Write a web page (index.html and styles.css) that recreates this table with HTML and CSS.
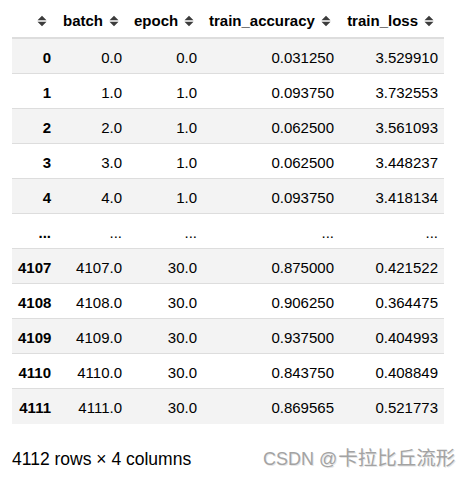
FILE: index.html
```html
<!DOCTYPE html>
<html>
<head>
<meta charset="utf-8">
<link rel="stylesheet" href="styles.css">
</head>
<body>
<div class="page">
  <table class="df">
    <colgroup>
      <col class="c-idx"><col class="c-batch"><col class="c-epoch"><col class="c-acc"><col class="c-loss">
    </colgroup>
    <thead>
      <tr>
        <th><span class="sort"><svg viewBox="0 0 10 12" width="10" height="12"><path d="M0.5 5.2 L5 0.7 L9.5 5.2 Z M0.5 6.8 L5 11.3 L9.5 6.8 Z"/></svg></span></th>
        <th>batch<span class="sort"><svg viewBox="0 0 10 12" width="10" height="12"><path d="M0.5 5.2 L5 0.7 L9.5 5.2 Z M0.5 6.8 L5 11.3 L9.5 6.8 Z"/></svg></span></th>
        <th>epoch<span class="sort"><svg viewBox="0 0 10 12" width="10" height="12"><path d="M0.5 5.2 L5 0.7 L9.5 5.2 Z M0.5 6.8 L5 11.3 L9.5 6.8 Z"/></svg></span></th>
        <th>train_accuracy<span class="sort"><svg viewBox="0 0 10 12" width="10" height="12"><path d="M0.5 5.2 L5 0.7 L9.5 5.2 Z M0.5 6.8 L5 11.3 L9.5 6.8 Z"/></svg></span></th>
        <th>train_loss<span class="sort"><svg viewBox="0 0 10 12" width="10" height="12"><path d="M0.5 5.2 L5 0.7 L9.5 5.2 Z M0.5 6.8 L5 11.3 L9.5 6.8 Z"/></svg></span></th>
      </tr>
    </thead>
    <tbody>
      <tr><th>0</th><td>0.0</td><td>0.0</td><td>0.031250</td><td>3.529910</td></tr>
      <tr><th>1</th><td>1.0</td><td>1.0</td><td>0.093750</td><td>3.732553</td></tr>
      <tr><th>2</th><td>2.0</td><td>1.0</td><td>0.062500</td><td>3.561093</td></tr>
      <tr><th>3</th><td>3.0</td><td>1.0</td><td>0.062500</td><td>3.448237</td></tr>
      <tr><th>4</th><td>4.0</td><td>1.0</td><td>0.093750</td><td>3.418134</td></tr>
      <tr><th>...</th><td>...</td><td>...</td><td>...</td><td>...</td></tr>
      <tr><th>4107</th><td>4107.0</td><td>30.0</td><td>0.875000</td><td>0.421522</td></tr>
      <tr><th>4108</th><td>4108.0</td><td>30.0</td><td>0.906250</td><td>0.364475</td></tr>
      <tr><th>4109</th><td>4109.0</td><td>30.0</td><td>0.937500</td><td>0.404993</td></tr>
      <tr><th>4110</th><td>4110.0</td><td>30.0</td><td>0.843750</td><td>0.408849</td></tr>
      <tr><th>4111</th><td>4111.0</td><td>30.0</td><td>0.869565</td><td>0.521773</td></tr>
    </tbody>
  </table>
  <p class="shape">4112 rows × 4 columns</p>
  <div class="watermark">CSDN @<span class="cjk">卡拉比丘流形</span></div>
</div>
</body>
</html>
```

FILE: styles.css
```css
html, body {
  margin: 0;
  padding: 0;
  background: #ffffff;
}

.page {
  position: relative;
  width: 471px;
  height: 477px;
  padding-left: 12px;
  box-sizing: border-box;
  font-family: "Liberation Sans", Arial, sans-serif;
  color: #000;
}

.df {
  border-collapse: collapse;
  table-layout: fixed;
  width: 432px;
  font-size: 15px;
  line-height: 17px;
}

.c-idx { width: 45px; }
.c-batch { width: 71px; }
.c-epoch { width: 75px; }
.c-acc { width: 137px; }
.c-loss { width: 104px; }

.df thead th {
  text-align: right;
  font-weight: bold;
  padding: 12px 6px 8px;
  border-bottom: 2px solid #dddddd;
  white-space: nowrap;
}

.df tbody th,
.df tbody td {
  text-align: right;
  padding: 10px 6px 7px;
  border-bottom: 1px solid #dddddd;
  white-space: nowrap;
}

.df tbody th {
  font-weight: bold;
}

.df tbody tr:last-child th,
.df tbody tr:last-child td {
  border-bottom: none;
  padding-bottom: 8px;
}

.df tbody tr:nth-child(odd) {
  background: #f3f3f3;
}

.sort {
  display: inline-block;
  width: 10px;
  height: 12px;
  margin-left: 6px;
  margin-right: 4px;
  vertical-align: -1px;
}

.sort svg {
  display: block;
  fill: #3c3c3c;
}

.shape {
  margin: 26px 0 0;
  font-size: 17.5px;
  line-height: 19px;
}

.watermark {
  position: absolute;
  left: 263px;
  top: 446px;
  font-family: "Liberation Sans", "Noto Sans CJK SC", sans-serif;
  font-size: 18px;
  line-height: 22px;
  color: #a3a3a3;
  text-shadow: 1px 1px 0 rgba(220, 220, 220, 0.7);
  white-space: nowrap;
}

.cjk {
  font-family: "Noto Sans CJK SC", sans-serif;
  font-size: 19.5px;
  margin-left: 1px;
}
```
